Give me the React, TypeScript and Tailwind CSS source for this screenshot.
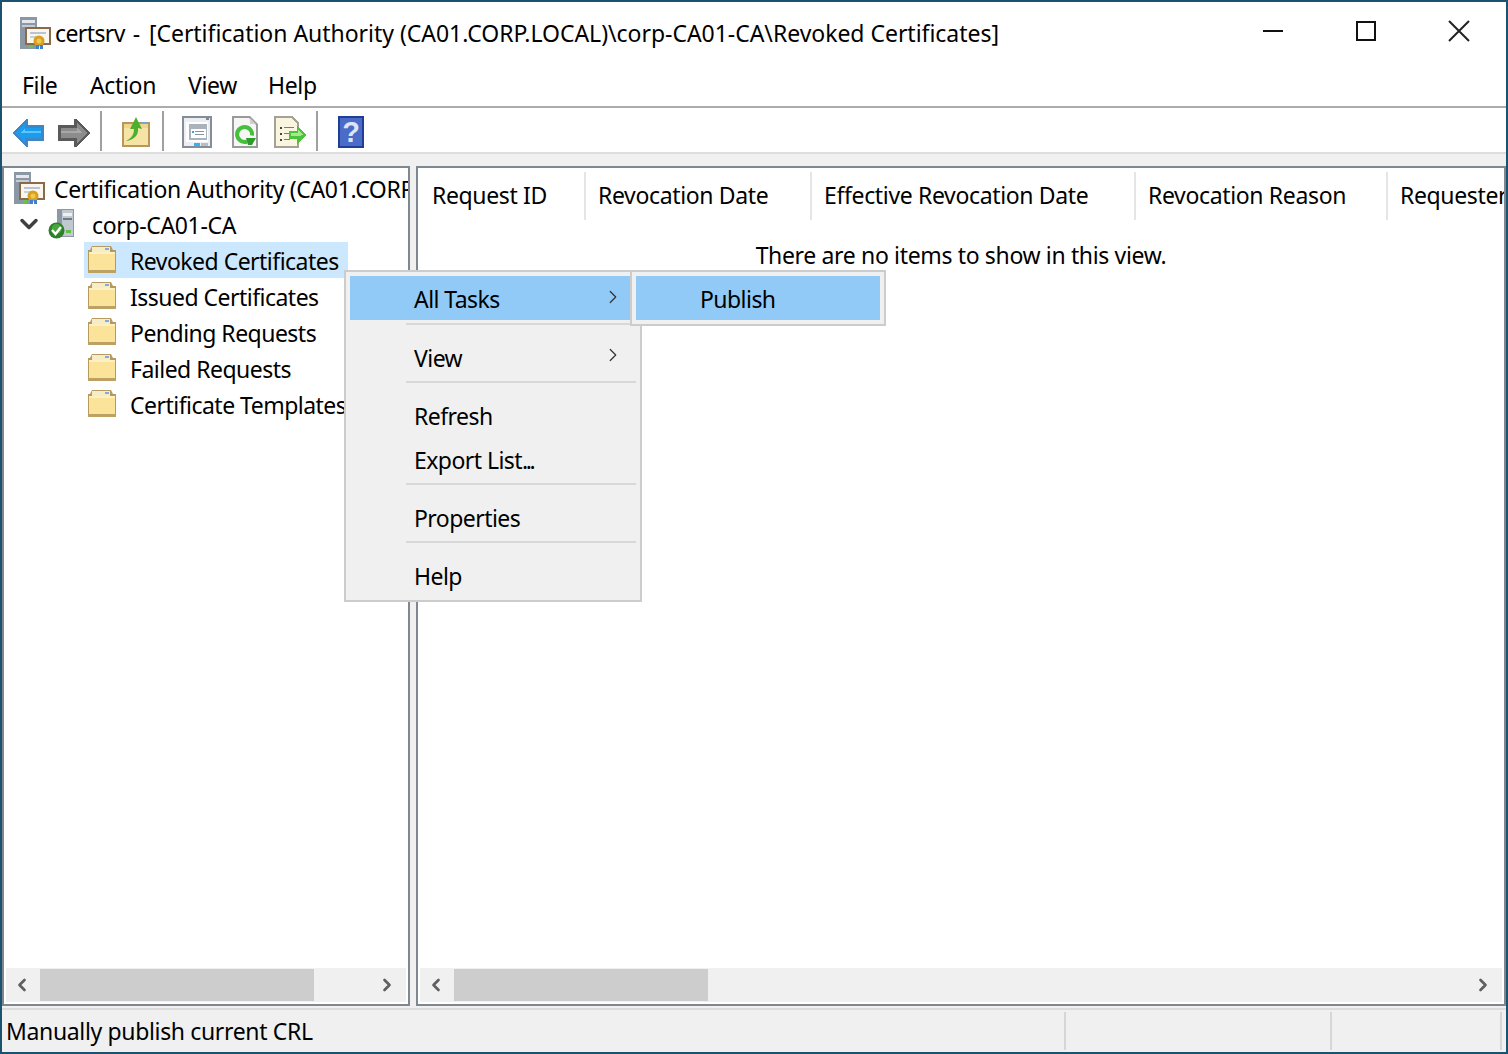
import React from 'react';
import { ChevronLeft, ChevronRight, ChevronDown } from 'lucide-react';

const CertIcon = () => (
  <svg width="32" height="32" viewBox="0 0 32 32" className="shrink-0">
    <rect x="0" y="0" width="17" height="32" fill="#8a97a5" />
    <rect x="2" y="3" width="13" height="3" fill="#e4e8ec" />
    <rect x="2" y="8" width="13" height="2" fill="#c4ccd4" />
    <rect x="5" y="10" width="26" height="18" fill="#8a6a48" />
    <rect x="7" y="12" width="22" height="14" fill="#f8f6ee" />
    <rect x="10" y="15" width="16" height="2" fill="#b8c4d4" />
    <rect x="10" y="19" width="8" height="2" fill="#c8d0da" />
    <circle cx="19" cy="24" r="5.5" fill="#d9a020" />
    <circle cx="19" cy="24" r="2.5" fill="#f0c850" />
    <rect x="16" y="28" width="3" height="4" fill="#3f7fd0" />
    <rect x="20" y="28" width="3" height="4" fill="#3f7fd0" />
    <rect x="9" y="28" width="4" height="3" fill="#6cc050" />
  </svg>
);

const ServerIcon = () => (
  <svg width="28" height="30" viewBox="0 0 28 30" className="shrink-0">
    <rect x="9" y="0" width="17" height="28" fill="#8c98a4" />
    <rect x="14" y="1" width="11" height="26" fill="#c0c8d0" />
    <rect x="15" y="4" width="9" height="3" fill="#eef1f4" />
    <rect x="15" y="9" width="9" height="2" fill="#6e7a86" />
    <rect x="18" y="21" width="5" height="3" fill="#60c040" />
    <circle cx="8.5" cy="21.5" r="8" fill="#2f7f2a" />
    <circle cx="8.5" cy="20" r="5" fill="#48a83e" />
    <path d="M4 21l3.5 4 5.5-7" fill="none" stroke="#ffffff" strokeWidth="2.4" />
  </svg>
);

const FolderIcon = () => (
  <svg width="28" height="27" viewBox="0 0 28 27" className="shrink-0 -mt-[1px]">
    <path d="M0 4h2l2-4h19l2 4h3v23H0z" fill="#b79a5e" />
    <rect x="4" y="1" width="18" height="5" fill="#f6ecc8" />
    <rect x="17" y="2" width="4" height="2" fill="#7aaede" />
    <path d="M1 6h26v18H1z" fill="#fbe39a" />
    <path d="M1 6h26v2H1z" fill="#fdf0c4" />
    <rect x="0" y="24" width="28" height="3" fill="#bda063" />
  </svg>
);

const BackArrow = () => (
  <svg width="32" height="28" viewBox="0 0 32 28" shapeRendering="crispEdges" className="mt-[4px]">
    <path d="M0 14 14 0h2v6h16v16H16v6h-2z" fill="#3f86c8" />
    <path d="M3 14 13 4v5h16v10H13v5z" fill="#1c9cec" />
    <path d="M8 14l5-5v3h16v2z" fill="#5cc4ff" />
  </svg>
);

const ForwardArrow = () => (
  <svg width="32" height="28" viewBox="0 0 32 28" shapeRendering="crispEdges" className="mt-[4px]">
    <path d="M32 14 18 0h-2v6H0v16h16v6h2z" fill="#5a5a5a" />
    <path d="M29 14 19 4v5H3v10h16v5z" fill="#8c8c8c" />
    <path d="M24 14l-5-5v3H3v2z" fill="#a8a8a8" />
  </svg>
);

const UpFolderIcon = () => (
  <svg width="30" height="32" viewBox="0 0 30 32" className="mt-[2px]">
    <rect x="1" y="6" width="28" height="25" fill="#b8975a" />
    <rect x="3" y="8" width="24" height="21" fill="#f0d58c" />
    <path d="M3 29 3 12h24v17z" fill="#f6e3a6" />
    <rect x="20" y="6" width="6" height="2" fill="#6fa8dc" />
    <path d="M5 25c6-3 8-7 8-12H9l6-12 6 12-4-1c1 7-4 12-12 13z" fill="#4caf2e" />
  </svg>
);

const PropsIcon = () => (
  <svg width="30" height="32" viewBox="0 0 30 32" shapeRendering="crispEdges" className="mt-[2px]">
    <rect x="0" y="0" width="30" height="32" fill="#858d98" />
    <rect x="2" y="2" width="26" height="28" fill="#eceef2" />
    <rect x="24" y="2" width="3" height="2" fill="#7c8794" />
    <rect x="4" y="6" width="22" height="20" fill="#fdfdfe" />
    <rect x="7" y="8" width="18" height="16" fill="#aab2bd" />
    <rect x="9" y="13" width="15" height="9" fill="#ffffff" />
    <rect x="10" y="15" width="2" height="2" fill="#34a8e8" />
    <rect x="13" y="15" width="9" height="1" fill="#8a929c" />
    <rect x="13" y="18" width="9" height="1" fill="#8a929c" />
    <rect x="12" y="27" width="6" height="3" fill="#2eb4ee" />
    <rect x="19" y="27" width="7" height="3" fill="#b8bec6" />
  </svg>
);

const RefreshIcon = () => (
  <svg width="26" height="32" viewBox="0 0 26 32" className="mt-[2px]">
    <path d="M0 0h18l8 8v24H0z" fill="#9a9a9a" />
    <path d="M2 2h15l7 7v21H2z" fill="#f6f6f6" />
    <path d="M18 2l6 6h-6z" fill="#cfcfcf" />
    <path d="M15 25.5a7.5 7.5 0 1 1 5-6" fill="none" stroke="#45bf3c" strokeWidth="4" />
    <path d="M14 22h10l-4 7h-4z" fill="#2e9a2a" />
  </svg>
);

const ExportIcon = () => (
  <svg width="32" height="32" viewBox="0 0 32 32" shapeRendering="crispEdges" className="mt-[2px]">
    <path d="M0 0h18l7 7v25H0z" fill="#a5a294" />
    <path d="M2 2h15l6 6v22H2z" fill="#faf5de" />
    <rect x="6" y="11" width="2" height="2" fill="#444" />
    <rect x="6" y="17" width="2" height="2" fill="#444" />
    <rect x="6" y="23" width="2" height="2" fill="#444" />
    <rect x="10" y="11" width="10" height="1" fill="#7b7b7b" />
    <rect x="10" y="17" width="6" height="1" fill="#7b7b7b" />
    <rect x="10" y="23" width="6" height="1" fill="#7b7b7b" />
    <path d="M32 19l-9-9v5h-8v8h8v5z" fill="#4cc43a" />
    <path d="M29 19l-5-5v3h-7v3h7z" fill="#a4e890" />
  </svg>
);

const HelpIcon = () => (
  <svg width="26" height="32" viewBox="0 0 26 32" className="mt-[2px]">
    <rect width="26" height="32" fill="#1f3f96" />
    <rect x="2" y="2" width="22" height="28" fill="#4a6cc8" />
    <text x="13" y="26" textAnchor="middle" fontSize="29" fontWeight="700" fill="#dfe4f4" fontFamily="Liberation Sans, sans-serif">?</text>
  </svg>
);

const MenuSep = ({ className }: { className: string }) => (
  <div className={className}>
    <div className="h-[2px] bg-[#d8d8d8]" />
  </div>
);

const MenuItem = ({ label, arrow, active }: { label: React.ReactNode; arrow?: boolean; active?: boolean }) => (
  <div className={`relative h-[44px] flex items-center pl-[64px] ${active ? 'bg-[#91c9f7] pt-[3px]' : ''}`}>
    <span className="whitespace-nowrap">{label}</span>
    {arrow && (
      <ChevronRight
        className={`absolute right-[12px] w-[22px] h-[22px] text-[#333] ${active ? 'top-[10px]' : 'top-[8px]'}`}
        strokeWidth={1.3}
      />
    )}
  </div>
);

const TreeRow = ({ label, selected }: { label: string; selected?: boolean }) => (
  <div className="h-[36px] flex items-center">
    <div className={`flex items-center h-[36px] pl-[4px] w-[264px] ml-[80px] ${selected ? 'bg-[#cce8ff]' : ''}`}>
      <FolderIcon />
      <span className="ml-[14px] pt-[2px] whitespace-nowrap tracking-[-0.52px]">{label}</span>
    </div>
  </div>
);

const ScrollBar = ({ thumbWidth }: { thumbWidth: string }) => (
  <div className="flex items-center h-[34px] bg-[#f0f0f0] mx-[2px] mb-[2px] relative shrink-0">
    <ChevronLeft className="w-[20px] h-[20px] ml-[6px] text-[#606060] shrink-0" strokeWidth={3.2} />
    <div className={`h-[32px] bg-[#cdcdcd] ml-[8px] ${thumbWidth}`} />
    <ChevronRight className="w-[20px] h-[20px] ml-auto mr-[9px] text-[#606060] shrink-0" strokeWidth={3.2} />
  </div>
);

const HeaderCell = ({ label, width }: { label: string; width: string }) => (
  <div className={`${width} h-[48px] shrink-0 pl-[12px] first:pl-[14px] pb-[2px] flex items-center border-r-2 border-[#e5e5e5] whitespace-nowrap last:border-r-0`}>
    {label}
  </div>
);

const ToolSep = () => <div className="w-[2px] h-[40px] bg-[#a0a0a0] shrink-0" />;

export default function App() {
  return (
    <div
      className="relative w-[1508px] h-[1054px] overflow-hidden bg-[#f0f0f0] border-2 border-[#1b5270] flex flex-col text-[23px] text-black tracking-[-0.35px]"
      style={{ fontFamily: '"Noto Sans", sans-serif' }}
    >
      {/* Title bar */}
      <div className="h-[62px] shrink-0 bg-white flex items-center pl-[18px]">
        <CertIcon />
        <span className="ml-[3px] whitespace-nowrap tracking-[-0.6px]">certsrv</span>
        <span className="ml-[8px] whitespace-nowrap">-</span>
        <span className="ml-[9px] whitespace-nowrap tracking-[-0.03px]">[Certification Authority (CA01.CORP.LOCAL)\corp-CA01-CA\Revoked Certificates]</span>
        <div className="ml-auto flex items-center">
          <svg width="22" height="22" viewBox="0 0 22 22" className="mr-[71px] -mt-[4px]"><rect x="1" y="10" width="20" height="2" fill="#111" /></svg>
          <svg width="22" height="22" viewBox="0 0 22 22" className="mr-[71px] -mt-[4px]"><rect x="2" y="2" width="18" height="18" fill="none" stroke="#111" strokeWidth="2" /></svg>
          <svg width="22" height="22" viewBox="0 0 22 22" className="mr-[36px] -mt-[4px]"><path d="M1 1l20 20M21 1 1 21" stroke="#222" strokeWidth="2" /></svg>
        </div>
      </div>

      {/* Menu bar */}
      <div className="h-[44px] shrink-0 bg-white flex items-center pl-[20px] border-b-2 border-[#acacac]">
        <span className="w-[68px]">File</span>
        <span className="w-[98px]">Action</span>
        <span className="w-[80px]">View</span>
        <span>Help</span>
      </div>

      {/* Toolbar */}
      <div className="h-[46px] shrink-0 bg-white border-b-2 border-[#dedede] flex items-center pl-[10px] pt-[2px]">
        <BackArrow />
        <div className="w-[14px]" />
        <ForwardArrow />
        <div className="w-[10px]" />
        <ToolSep />
        <div className="w-[19px]" />
        <UpFolderIcon />
        <div className="w-[11px]" />
        <ToolSep />
        <div className="w-[18px]" />
        <PropsIcon />
        <div className="w-[20px]" />
        <RefreshIcon />
        <div className="w-[16px]" />
        <ExportIcon />
        <div className="w-[10px]" />
        <ToolSep />
        <div className="w-[20px]" />
        <HelpIcon />
      </div>

      {/* Panes */}
      <div className="flex-1 min-h-0 flex pt-[12px] pb-[2px] bg-[#f0f0f0]">
        <div className="w-[408px] shrink-0 bg-white border-2 border-[#7f8890] flex flex-col overflow-hidden">
          <div className="flex-1 min-h-0 pl-[10px] overflow-hidden">
            <div className="h-[36px] mt-[2px] flex items-center whitespace-nowrap">
              <CertIcon />
              <span className="ml-[8px] pt-[2px]">Certification Authority (CA01.CORP.LOCAL)</span>
            </div>
            <div className="h-[36px] flex items-center">
              <ChevronDown className="w-[28px] h-[28px] text-[#404040] ml-[1px]" strokeWidth={3} />
              <div className="ml-[5px]"><ServerIcon /></div>
              <span className="ml-[16px] pt-[2px]">corp-CA01-CA</span>
            </div>
            <div className="-ml-[10px]">
              <TreeRow label="Revoked Certificates" selected />
              <TreeRow label="Issued Certificates" />
              <TreeRow label="Pending Requests" />
              <TreeRow label="Failed Requests" />
              <TreeRow label="Certificate Templates" />
            </div>
          </div>
          <ScrollBar thumbWidth="w-[274px]" />
        </div>

        <div className="w-[6px] shrink-0" />

        <div className="flex-1 min-w-0 bg-white border-2 border-[#7f8890] flex flex-col overflow-hidden">
          <div className="flex-1 min-h-0 overflow-hidden">
            <div className="flex pt-[4px]">
              <HeaderCell label="Request ID" width="w-[168px]" />
              <HeaderCell label="Revocation Date" width="w-[226px]" />
              <HeaderCell label="Effective Revocation Date" width="w-[324px]" />
              <HeaderCell label="Revocation Reason" width="w-[252px]" />
              <HeaderCell label="Requester Name" width="w-[200px]" />
            </div>
            <div className="text-center mt-[17px] h-[36px] leading-[36px]">There are no items to show in this view.</div>
          </div>
          <ScrollBar thumbWidth="w-[254px]" />
        </div>
      </div>

      {/* Status bar */}
      <div className="h-[44px] shrink-0 flex items-center border-t-2 border-[#dcdcdc]">
        <div className="w-[1064px] h-[38px] pl-[4px] flex items-center border-r-2 border-[#d6d6d6]">Manually publish current CRL</div>
        <div className="w-[266px] h-[38px] border-r-2 border-[#d6d6d6]" />
        <div className="w-[170px] h-[38px] border-r-2 border-[#d6d6d6]" />
      </div>

      {/* Context menu */}
      <div className="absolute left-[342px] top-[268px] w-[298px] h-[332px] bg-[#f0f0f0] border-2 border-[#cccccc] p-[4px] tracking-[-0.55px]">
        <MenuItem label="All Tasks" arrow active />
        <MenuSep className="h-[16px] pt-[3px] ml-[56px]" />
        <MenuItem label="View" arrow />
        <MenuSep className="h-[14px] pt-[1px] ml-[56px]" />
        <MenuItem label="Refresh" />
        <MenuItem label={<>Export List<span className="tracking-[-2.5px]">...</span></>} />
        <MenuSep className="h-[14px] pt-[1px] ml-[56px]" />
        <MenuItem label="Properties" />
        <MenuSep className="h-[14px] pt-[1px] ml-[56px]" />
        <MenuItem label="Help" />
      </div>

      {/* Submenu */}
      <div className="absolute left-[628px] top-[268px] w-[256px] h-[56px] bg-[#f0f0f0] border-2 border-[#cccccc] p-[4px] tracking-[-0.55px]">
        <MenuItem label="Publish" active />
      </div>
    </div>
  );
}
